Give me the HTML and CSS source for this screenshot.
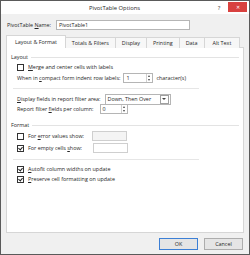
FILE: index.html
```html
<!DOCTYPE html>
<html>
<head>
<meta charset="utf-8">
<link rel="stylesheet" href="styles.css">
</head>
<body>
<div class="dialog">
  <div class="titlebar">
    <div class="title">PivotTable Options</div>
    <div class="help">?</div>
    <div class="close">✕</div>
  </div>
  <div class="main">
    <div class="name-row">
      <span class="name-label">PivotTable <u>N</u>ame:</span>
      <div class="name-input">PivotTable1</div>
    </div>
    <div class="tabs">
      <div class="tab active">Layout &amp; Format</div>
      <div class="tab">Totals &amp; Filters</div>
      <div class="tab">Display</div>
      <div class="tab">Printing</div>
      <div class="tab">Data</div>
      <div class="tab last">Alt Text</div>
    </div>
    <div class="panel">
      <div class="group-head"><span>Layout</span><i class="rule"></i></div>
      <div class="row">
        <span class="cb"></span><span><u>M</u>erge and center cells with labels</span>
      </div>
      <div class="row tall">
        <span>When in <u>c</u>ompact form indent row labels:</span>
        <div class="spin w1"><span>1</span><b class="arrows"></b></div>
        <span>character(s)</span>
      </div>
      <div class="sep"></div>
      <div class="row">
        <span><u>D</u>isplay fields in report filter area:</span>
        <div class="select"><span>Down, Then Over</span><b class="drop"></b></div>
      </div>
      <div class="row">
        <span>Report filter <u>f</u>ields per column:</span>
        <div class="spin w2"><span>0</span><b class="arrows"></b></div>
      </div>
      <div class="group-head fmt"><span>Format</span><i class="rule"></i></div>
      <div class="row tall">
        <span class="cb"></span><span>For <u>e</u>rror values show:</span>
        <div class="box b1"></div>
      </div>
      <div class="row tall">
        <span class="cb on"></span><span>For empty cells <u>s</u>how:</span>
        <div class="box b2"></div>
      </div>
      <div class="sep2"></div>
      <div class="row">
        <span class="cb on"></span><span><u>A</u>utofit column widths on update</span>
      </div>
      <div class="row">
        <span class="cb on"></span><span><u>P</u>reserve cell formatting on update</span>
      </div>
    </div>
    <div class="buttons">
      <div class="btn ok">OK</div>
      <div class="btn">Cancel</div>
    </div>
  </div>
</div>
</body>
</html>
```
FILE: styles.css
```css
html, body { margin: 0; padding: 0; background: #fff; }
body { width: 250px; height: 255px; overflow: hidden; font-family: "Open Sans", "Noto Sans", sans-serif; font-size: 5.4px; color: #262626; }
.dialog { box-sizing: border-box; width: 250px; height: 255px; border: 1px solid #5a5a5a; display: flex; flex-direction: column; background: #f0f0f0; }
.titlebar { height: 13px; background: #fff; display: flex; align-items: center; position: relative; flex: none; }
.title { flex: 1; text-align: center; font-size: 5.8px; padding-left: 14px; }
.help { width: 10px; text-align: center; font-size: 6px; margin-right: 4px; color: #333; }
.close { width: 19px; height: 10px; margin-right: 2px; margin-top: -2px; background: #d8413f; color: #fff; font-size: 5px; display: flex; align-items: center; justify-content: center; }
.main { flex: 1; display: flex; flex-direction: column; padding: 0 5px 0 5px; }
.name-row { display: flex; align-items: center; height: 11px; margin-top: 5px; }
.name-label { width: 49px; padding-left: 1px; }
.name-input { width: 130px; height: 8px; border: 1px solid #b5b5b5; background: #fff; line-height: 8px; padding-left: 2px; box-sizing: content-box; }
.tabs { display: flex; align-items: flex-end; margin-top: 6px; height: 12px; position: relative; z-index: 1; }
.tab { height: 10px; line-height: 10px; padding: 0 6px; border: 1px solid #d6d6d6; border-bottom: none; background: #f7f7f7; margin-left: -1px; white-space: nowrap; }
.tab:first-child { margin-left: 0; }
.tab.active { height: 12px; line-height: 12px; background: #fff; padding: 0 8px; }
.tab.last { padding: 0 8px; }
.panel { box-sizing: border-box; height: 186px; border: 1px solid #d6d6d6; background: #fff; margin-top: -1px; padding: 4px 4px 0 4px; display: flex; flex-direction: column; }
.group-head { display: flex; align-items: center; height: 10px; }
.group-head .rule { flex: 1; height: 1px; background: #e3e3e3; margin-left: 3px; }
.group-head.fmt { margin-top: 6px; }
.row { display: flex; align-items: center; height: 10px; padding-left: 6px; white-space: nowrap; }
.row.tall { height: 12px; }
.cb { width: 5px; height: 5px; border: 1px solid #333; margin-right: 4px; flex: none; position: relative; background: #fff; }
.cb.on::after { content: ""; position: absolute; left: 1px; top: 0; width: 2px; height: 3px; border: solid #222; border-width: 0 1px 1px 0; transform: rotate(40deg); }
.spin { height: 8px; border: 1px solid #b5b5b5; display: flex; align-items: center; padding-left: 2px; position: relative; }
.spin span { flex: 1; }
.spin.w1 { width: 26px; margin-left: 3px; margin-right: 3px; }
.spin.w2 { width: 24px; margin-left: 6px; }
.arrows { width: 5px; height: 8px; border-left: 1px solid #d0d0d0; position: relative; }
.arrows::before, .arrows::after { content: ""; position: absolute; left: 1px; border-left: 1.5px solid transparent; border-right: 1.5px solid transparent; }
.arrows::before { top: 1px; border-bottom: 2px solid #444; }
.arrows::after { bottom: 1px; border-top: 2px solid #444; }
.sep { height: 1px; background: #e6e6e6; margin: 4px 40px 5px 2px; }
.select { width: 62px; height: 9px; border: 1px solid #b5b5b5; display: flex; align-items: center; padding-left: 2px; margin-left: 4px; }
.select span { flex: 1; }
.drop { width: 7px; height: 7px; border: 1px solid #a0a0a0; margin-right: 1px; position: relative; }
.drop::after { content: ""; position: absolute; left: 1.5px; top: 2.5px; border-left: 2px solid transparent; border-right: 2px solid transparent; border-top: 2px solid #444; }
.box { width: 33px; height: 8px; border: 1px solid #cfcfcf; background: #fff; }
.box.b1 { margin-left: 8px; background: #f4f4f4; }
.box.b2 { margin-left: 11px; }
.sep2 { height: 1px; background: #e6e6e6; margin: 5px 40px 4px 2px; }
.buttons { display: flex; justify-content: flex-end; gap: 6px; margin-top: 5px; padding-right: 1px; }
.btn { box-sizing: border-box; width: 39px; height: 12px; border: 1px solid #adadad; background: #e5e5e5; display: flex; align-items: center; justify-content: center; }
.btn.ok { border-color: #3c7fd5; }
```
